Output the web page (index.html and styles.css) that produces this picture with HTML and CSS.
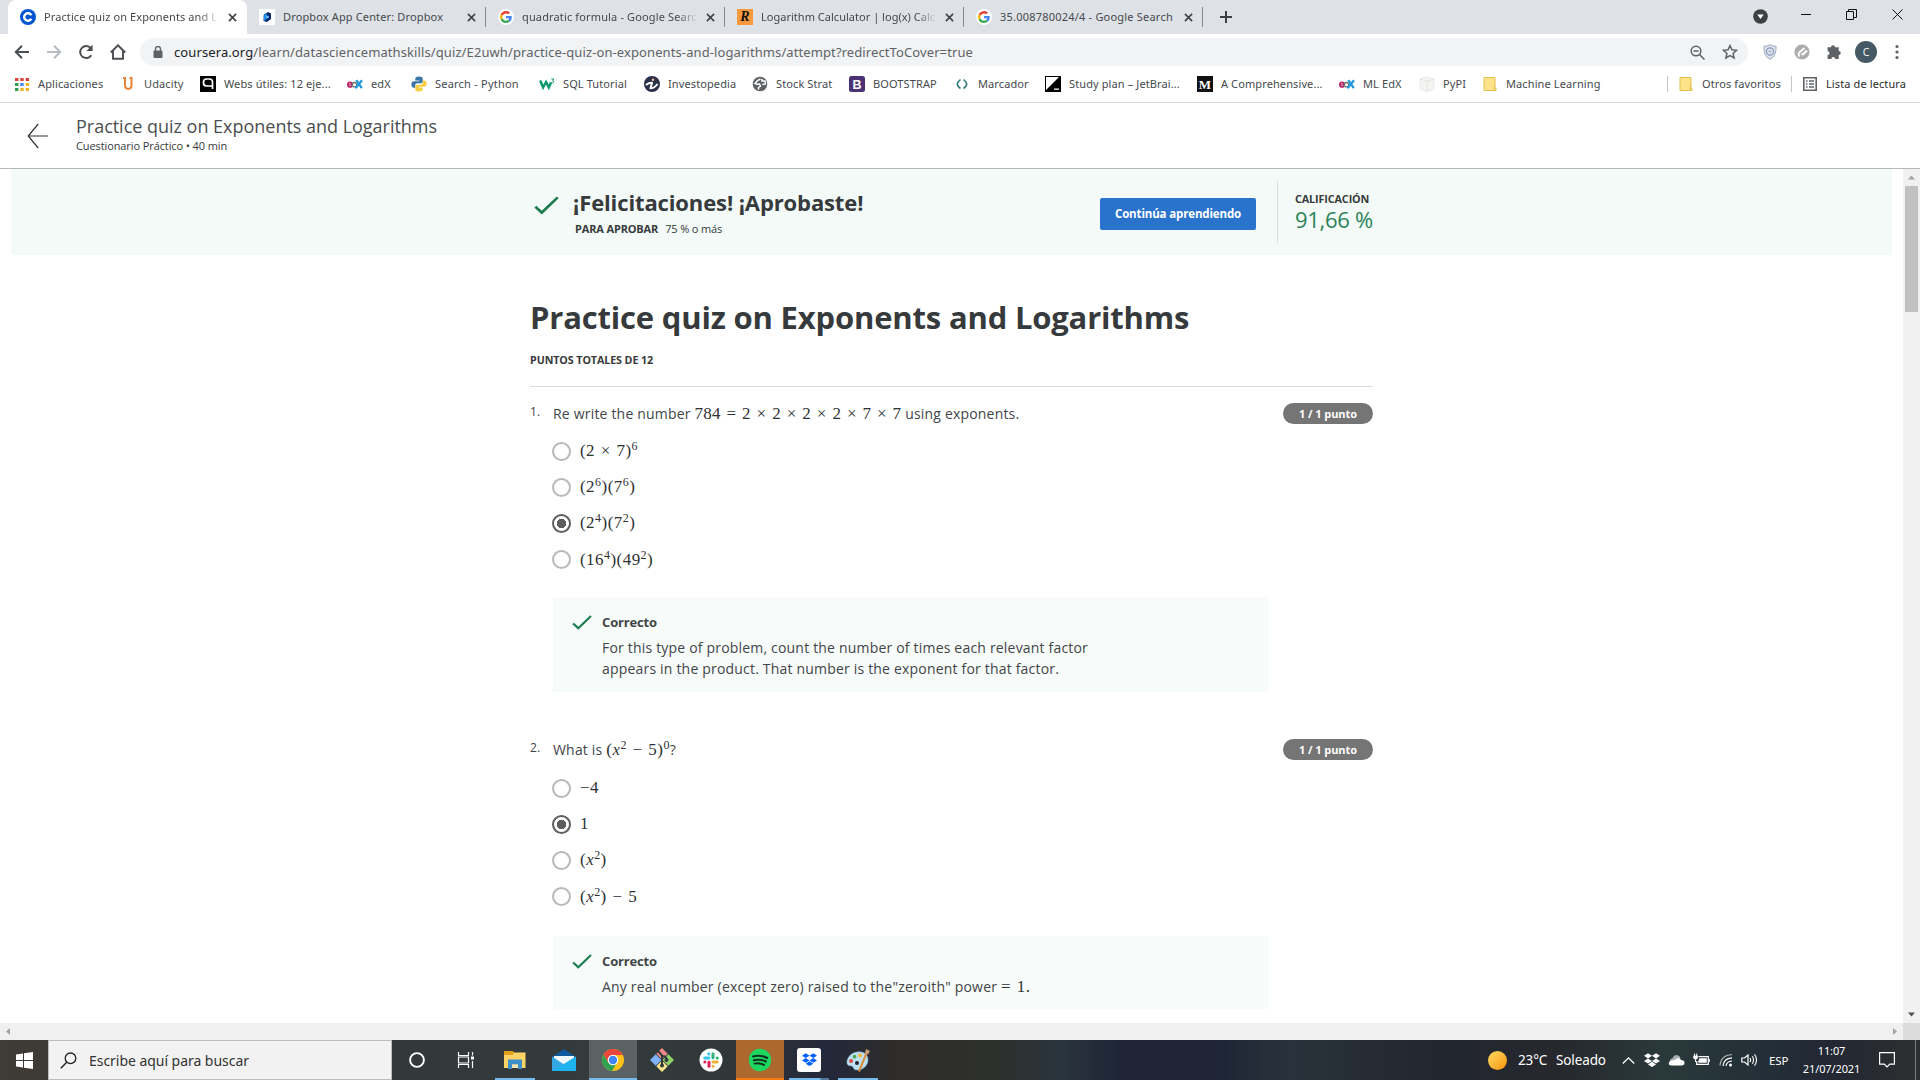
FILE: index.html
```html
<!DOCTYPE html>
<html lang="es">
<head>
<meta charset="utf-8">
<title>Practice quiz on Exponents and Logarithms</title>
<link rel="stylesheet" href="styles.css">
</head>
<body>
<svg width="0" height="0" class="defs" aria-hidden="true">
  <symbol id="google" viewBox="0 0 48 48"><path fill="#EA4335" d="M24 9.500c3.500 0 6.700 1.200 9.200 3.600l6.900-6.900C35.900 2.400 30.500 0 24 0 14.600 0 6.500 5.400 2.600 13.200l8 6.200C12.400 13.700 17.700 9.500 24 9.500z"/><path fill="#4285F4" d="M47 24.500c0-1.600-.2-3.100-.4-4.500H24v9h12.900c-.6 3-2.200 5.500-4.800 7.200l7.700 6C44.400 38 47 31.800 47 24.500z"/><path fill="#FBBC05" d="M10.500 28.600a14.500 14.500 0 010-9.200l-8-6.200a24 24 0 000 21.600z"/><path fill="#34A853" d="M24 48c6.500 0 11.900-2.100 15.900-5.800l-7.700-6c-2.200 1.500-4.900 2.300-8.200 2.300-6.300 0-11.600-4.200-13.500-9.900l-8 6.200C6.500 42.600 14.600 48 24 48z"/></symbol>
  <symbol id="close" viewBox="0 0 10 10"><path d="M1 1l8 8M9 1L1 9" stroke="#3c4043" stroke-width="1.700"/></symbol>
  <symbol id="folder" viewBox="0 0 16 16"><path d="M2 1.500h11v10l1 1v2H2z" fill="#ffe38a" stroke="#e5c04f"/><path d="M12.500 10v4" stroke="#e5b93a"/></symbol>
  <symbol id="check" viewBox="0 0 24 18"><path d="M1.300 10.200L7.500 15.800 22.800 1.200" fill="none" stroke="#1d7c50" stroke-width="2.600"/></symbol>
  <symbol id="dropbox" viewBox="0 0 20 18"><path d="M5 0l5 3.200-5 3.200L0 3.200zM15 0l5 3.200-5 3.200-5-3.200zM5 6.400l5 3.200-5 3.200L0 9.600zM15 6.400l5 3.200-5 3.200-5-3.200zM5 13.900l5-3.200 5 3.200-5 3.200z" fill="currentColor"/></symbol>
  <symbol id="edx" viewBox="0 0 16 16"><circle cx="3" cy="8.700" r="2.200" fill="none" stroke="#b72667" stroke-width="1.800"/><path d="M1 8.900h4" stroke="#b72667" stroke-width="1.300"/><circle cx="7.500" cy="8.700" r="2.200" fill="none" stroke="#777" stroke-width="1.400"/><path d="M9.300 4.200l5.500 8M15 4.200l-6.500 8" stroke="#1d9ae0" stroke-width="2.300"/></symbol>
</svg>

<header class="tabs">
  <div class="tab active"><svg class="fav" viewBox="0 0 16 16"><circle cx="8" cy="8" r="8" fill="#0056d2"/><path d="M11.300 6.200A3.800 3.800 0 1011.300 9.800" fill="none" stroke="#fff" stroke-width="2.400"/></svg><span class="tt">Practice quiz on Exponents and L</span><svg class="x"><use href="#close"/></svg></div>
  <div class="tab"><svg class="fav" viewBox="0 0 16 16"><path fill="#fff" d="M0 0h16v16H0z"/><path d="M5 5.500l4-2.500 3 1.500v5.500l-4 3-3.500-1z" fill="#0a2a6b"/><path d="M4.500 6l3.500-1.500v5L5 12z" fill="#1d8ff0"/><circle cx="8.500" cy="8" r="1.300" fill="#7cc5ff"/></svg><span class="tt">Dropbox App Center: Dropbox</span><svg class="x"><use href="#close"/></svg></div>
  <div class="tab"><span class="fav disc"><svg><use href="#google"/></svg></span><span class="tt">quadratic formula - Google Searc</span><svg class="x"><use href="#close"/></svg></div>
  <div class="tab"><span class="fav omni">R</span><span class="tt">Logarithm Calculator | log(x) Calc</span><svg class="x"><use href="#close"/></svg></div>
  <div class="tab"><span class="fav disc"><svg><use href="#google"/></svg></span><span class="tt">35.008780024/4 - Google Search</span><svg class="x"><use href="#close"/></svg></div>
  <svg class="plus" viewBox="0 0 12 12"><path d="M6 0v12M0 6h12" stroke="#3c4043" stroke-width="2"/></svg>
  <div class="win">
    <svg width="15" height="15" viewBox="0 0 15 15"><circle cx="7.500" cy="7.500" r="7.300" fill="#3c4043"/><path d="M4.300 5.500h6.400L7.500 10z" fill="#fff"/></svg>
    <svg width="10" height="10" viewBox="0 0 10 10"><path d="M0 5.500h10" stroke="#111"/></svg>
    <svg width="11" height="11" viewBox="0 0 11 11"><path d="M.5 2.500h7v8h-7zM2.500 2.500v-2h8v8h-3" fill="none" stroke="#111"/></svg>
    <svg width="11" height="11" viewBox="0 0 11 11"><path d="M.5.500l10 10M10.500.500l-10 10" stroke="#111"/></svg>
  </div>
</header>

<div class="toolbar">
  <svg class="nav" viewBox="0 0 16 16"><path d="M15 8H2.500M8 1.800L1.800 8 8 14.200" fill="none" stroke="#4a4d51" stroke-width="2"/></svg>
  <svg class="nav" viewBox="0 0 16 16"><path d="M1 8h12.500M8 1.800L14.200 8 8 14.200" fill="none" stroke="#b9bcc0" stroke-width="2"/></svg>
  <svg class="nav" viewBox="0 0 16 16"><path d="M13.300 11.200A6 6 0 1112.800 4.200" fill="none" stroke="#4a4d51" stroke-width="2"/><path d="M14.600.8v6.200H8.400z" fill="#4a4d51"/></svg>
  <svg class="nav" viewBox="0 0 16 16"><path d="M.8 8.500L8 1.300l7.200 7.200M3 7v7.800h10V7" fill="none" stroke="#4a4d51" stroke-width="1.900"/></svg>
  <div class="omnibox">
    <svg width="10" height="12" viewBox="0 0 10 12"><rect x="0.500" y="4.500" width="9" height="7.500" rx="1" fill="#5f6368"/><path d="M2.500 5V3a2.500 2.500 0 015 0v2" fill="none" stroke="#5f6368" stroke-width="1.400"/></svg>
    <span class="url"><b>coursera.org</b>/learn/datasciencemathskills/quiz/E2uwh/practice-quiz-on-exponents-and-logarithms/attempt?redirectToCover=true</span>
    <svg class="lens" width="15" height="15" viewBox="0 0 15 15"><circle cx="6" cy="6" r="4.800" fill="none" stroke="#5f6368" stroke-width="1.500"/><path d="M9.500 9.500l5 5M3.500 6h5" stroke="#5f6368" stroke-width="1.500"/></svg>
    <svg width="16" height="16" viewBox="0 0 16 16"><path d="M8 1.500l1.900 4.300 4.700.5-3.500 3.100 1 4.600L8 11.600 3.900 14l1-4.600L1.400 6.300l4.700-.5z" fill="none" stroke="#5f6368" stroke-width="1.500"/></svg>
  </div>
  <div class="ext">
    <svg width="16" height="16" viewBox="0 0 16 16"><path d="M8 .6C10 2 12 2.300 14 2.300c.2 6-1 10.500-6 13C3 12.800 1.800 8.300 2 2.300 4 2.300 6 2 8 .6z" fill="#dfe5ef" stroke="#9aa5ba"/><circle cx="8" cy="7.500" r="3.600" fill="none" stroke="#8798b8" stroke-width="1.200"/><circle cx="8" cy="7.500" r="1.500" fill="#b3bfd5"/></svg>
    <svg width="16" height="16" viewBox="0 0 16 16"><circle cx="8" cy="8" r="7.600" fill="#acacac"/><path d="M5.500 12.500c-2.500-3 .5-4.500 1.500-5.500l3.500-3M7.500 9.500l1.500 1 4-4" stroke="#fff" stroke-width="2" fill="none"/></svg>
    <svg width="16" height="16" viewBox="0 0 16 16"><path d="M5 3.300a2 2 0 014 0h3.700v3.600a2 2 0 010 4.100v4H9.200a1.900 1.900 0 00-3.800 0H1.600v-3.900a1.900 1.900 0 000-3.800V3.300z" fill="#5f6368"/></svg>
    <span class="avatar">C</span>
    <svg width="4" height="16" viewBox="0 0 4 16"><g fill="#5f6368"><circle cx="2" cy="2.500" r="1.600"/><circle cx="2" cy="8" r="1.600"/><circle cx="2" cy="13.500" r="1.600"/></g></svg>
  </div>
</div>

<nav class="marks">
  <a><svg viewBox="0 0 16 16"><path d="M1 2h3.400v3H1zM6.300 2h3.400v3H6.300zM11.600 2H15v3h-3.400z" fill="#d8453b"/><path d="M1 7h3.400v3H1zM1 12h3.400v3H1z" fill="#2f9b55"/><path d="M6.300 7h3.400v3H6.300z" fill="#4285f4"/><path d="M11.600 7H15v3h-3.400zM6.300 12h3.400v3H6.300zM11.600 12H15v3h-3.400z" fill="#f0b323"/></svg><span>Aplicaciones</span></a>
  <a><svg viewBox="0 0 16 16"><path d="M3 2h3M5 2v7.500c0 4.500 6.500 4.500 6.500 0V1.500M9.500 2h3" fill="none" stroke="#e8833a" stroke-width="2"/></svg><span>Udacity</span></a>
  <a><svg viewBox="0 0 16 16"><path d="M0 0h16v16H0z"/><path d="M12.500 13V6q0-3-3-3H6.500q-3 0-3 3v1q0 3 3 3h6" fill="none" stroke="#fff" stroke-width="1.700"/></svg><span>Webs útiles: 12 eje...</span></a>
  <a><svg><use href="#edx"/></svg><span>edX</span></a>
  <a><svg viewBox="0 0 16 16"><path d="M8 .5c-3 0-3.700 1-3.700 2.300V4.500h4v.8H3C1 5.300.4 6.800.4 8.500s.8 3.200 2.400 3.200h1.400V9.500c0-1.300 1-2.200 2.200-2.200h3.500c1 0 1.800-.9 1.800-1.900V2.700C11.700 1.300 10.500.5 8 .5z" fill="#3a74a8"/><path d="M8 15.600c3 0 3.700-1 3.700-2.300v-1.700h-4v-.8H13c2 0 2.700-1.500 2.700-3.200s-.8-3.200-2.400-3.200h-1.500v2.200c0 1.300-1 2.200-2.200 2.200H6c-1 0-1.700.9-1.700 1.900v2.700c0 1.400 1.200 2.200 3.700 2.200z" fill="#f7cf46"/></svg><span>Search - Python</span></a>
  <a><svg viewBox="0 0 16 16"><path d="M1.200 4.500l2.900 7L7 6l2.800 5.500 2.200-5" fill="none" stroke="#04996b" stroke-width="2.400"/><path d="M12.300 3h2.500l-1.200 1.500q1.700.5.800 1.800t-2.200.2" fill="none" stroke="#04996b"/></svg><span>SQL Tutorial</span></a>
  <a><svg viewBox="0 0 16 16"><circle cx="8" cy="8" r="8" fill="#2a3047"/><path d="M2 9q4-3 6-2L6.500 12q3 1 7-4" fill="none" stroke="#fff" stroke-width="2"/><circle cx="9" cy="3.800" r="1.300" fill="#f6b7a0"/></svg><span>Investopedia</span></a>
  <a><svg viewBox="0 0 16 16"><circle cx="8" cy="8" r="7.300" fill="#5f6368"/><path d="M8.500 3L5.500 4.500 3 7.500q2 1 4.500.5l1 2-2 1.500v2M10 3v2h3l.5 3-3 .5" fill="none" stroke="#fff" stroke-width="1.500"/></svg><span>Stock Strat</span></a>
  <a><svg viewBox="0 0 16 16"><rect width="16" height="16" rx="2.500" fill="#4c3274"/><text class="bs" x="8" y="12.600" text-anchor="middle">B</text></svg><span>BOOTSTRAP</span></a>
  <a><svg viewBox="0 0 16 16"><path d="M6.500 3.500Q3.500 6 3.300 8t3.200 4.500M9.500 3.500Q12.500 6 12.700 8t-3.200 4.500" fill="none" stroke="#347b7d" stroke-width="1.600"/></svg><span>Marcador</span></a>
  <a><svg viewBox="0 0 16 16"><path d="M0 0h16v16H0z"/><path d="M1 1h13L1 14zM9 12.500h5v1.200H9z" fill="#fff"/></svg><span>Study plan – JetBrai...</span></a>
  <a><svg viewBox="0 0 16 16"><path d="M0 0h16v16H0z" fill="#111"/><text class="md" x="8" y="12.500" text-anchor="middle">M</text></svg><span>A Comprehensive...</span></a>
  <a><svg><use href="#edx"/></svg><span>ML EdX</span></a>
  <a><svg viewBox="0 0 16 16"><path d="M1 3l7-2.500L15 3v10l-7 2.500L1 13z" fill="#f4f4f2" stroke="#e3e3e0" stroke-width=".7"/><path d="M1 3l7 2.500L15 3M8 5.500v10" fill="none" stroke="#dddddb" stroke-width=".7"/></svg><span>PyPI</span></a>
  <a><svg><use href="#folder"/></svg><span>Machine Learning</span></a>
  <a class="sep"><svg><use href="#folder"/></svg><span>Otros favoritos</span></a>
  <a class="sep dark"><svg viewBox="0 0 16 16"><path d="M1.800 1.800h12.400v12.400H1.800z" fill="none" stroke="#5f6368" stroke-width="1.600"/><path d="M4 5h1.500M7 5h5M4 8h1.500M7 8h5M4 11h1.500M7 11h5" stroke="#5f6368" stroke-width="1.400"/></svg><span>Lista de lectura</span></a>
</nav>

<div class="crumb">
  <svg width="22" height="26" viewBox="0 0 22 26"><path d="M21 13H1.200M11.200 1L1.200 13l10 12" fill="none" stroke="#333" stroke-width="1.200"/></svg>
  <div><h2>Practice quiz on Exponents and Logarithms</h2><p>Cuestionario Práctico • 40 min</p></div>
</div>

<main class="view">
  <div class="scroll">
    <section class="banner">
      <svg class="bigcheck"><use href="#check"/></svg>
      <div class="grats"><h3>¡Felicitaciones! ¡Aprobaste!</h3><p><b>PARA APROBAR</b><span>75 % o más</span></p></div>
      <button>Continúa aprendiendo</button>
      <div class="grade"><b>CALIFICACIÓN</b><strong>91,66 %</strong></div>
    </section>

    <article class="quiz">
      <h1>Practice quiz on Exponents and Logarithms</h1>
      <p class="total">PUNTOS TOTALES DE 12</p>

      <section class="q q1">
        <div class="num">1.</div>
        <div class="body">
          <p class="ask">Re write the number <span class="m wide">784 = 2 × 2 × 2 × 2 × 7 × 7</span> using exponents.</p>
          <ul>
            <li><i></i><span class="m">(2 × 7)<sup>6</sup></span></li>
            <li><i></i><span class="m">(2<sup>6</sup>)(7<sup>6</sup>)</span></li>
            <li><i class="on"></i><span class="m">(2<sup>4</sup>)(7<sup>2</sup>)</span></li>
            <li><i></i><span class="m">(16<sup>4</sup>)(49<sup>2</sup>)</span></li>
          </ul>
          <div class="fb"><svg><use href="#check"/></svg><div><b>Correcto</b><p>For this type of problem, count the number of times each relevant factor<br>appears in the product. That number is the exponent for that factor.</p></div></div>
        </div>
        <div class="pts">1 / 1 punto</div>
      </section>

      <section class="q q2">
        <div class="num">2.</div>
        <div class="body">
          <p class="ask">What is <span class="m">(<em>x</em><sup>2</sup> − 5)<sup>0</sup></span>?</p>
          <ul>
            <li><i></i><span class="m">−4</span></li>
            <li><i class="on"></i><span class="m">1</span></li>
            <li><i></i><span class="m">(<em>x</em><sup>2</sup>)</span></li>
            <li><i></i><span class="m">(<em>x</em><sup>2</sup>) − 5</span></li>
          </ul>
          <div class="fb"><svg><use href="#check"/></svg><div><b>Correcto</b><p>Any real number (except zero) raised to the"zeroith" power <span class="m">= 1.</span></p></div></div>
        </div>
        <div class="pts">1 / 1 punto</div>
      </section>
    </article>
  </div>
  <div class="vbar"><svg viewBox="0 0 17 17"><path d="M5 10.500h7L8.500 6.500z" fill="#a3a3a3"/></svg><div class="thumb"></div><svg class="end" viewBox="0 0 17 17"><path d="M5 6.500h7l-3.500 4z" fill="#505050"/></svg></div>
</main>
<div class="hbar"><svg viewBox="0 0 17 17"><path d="M10 5v7L6 8.500z" fill="#a3a3a3"/></svg><svg class="end" viewBox="0 0 17 17"><path d="M7 5v7l4-3.500z" fill="#a3a3a3"/></svg><div class="corner"></div></div>

<footer class="task">
  <div class="start"><svg width="17" height="17" viewBox="0 0 17 17"><path d="M0 2.400l7-1v6.700H0zM8 1.200L17 0v8.100H8zM0 9h7v6.600l-7-1zM8 9h9v8l-9-1.200z" fill="#fff"/></svg></div>
  <div class="search"><svg width="17" height="17" viewBox="0 0 17 17"><circle cx="10.500" cy="6.300" r="5.300" fill="none" stroke="#222" stroke-width="1.300"/><path d="M6.700 10.200L.8 16.300" stroke="#222" stroke-width="1.400"/></svg><span>Escribe aquí para buscar</span></div>
  <div class="apps">
    <div><svg viewBox="0 0 24 24"><circle cx="12" cy="12" r="6.900" fill="none" stroke="#fff" stroke-width="1.900"/></svg></div>
    <div><svg viewBox="0 0 24 24"><path d="M4.500 4v3.500h10V4M4.500 20v-3.500h10V20M4.500 9h10v6h-10zM18.500 4v3.500M18.500 13v7" fill="none" stroke="#fff" stroke-width="1.200"/><path d="M17 8.500h3v3h-3z" fill="#fff"/></svg></div>
    <div class="run"><svg viewBox="0 0 24 24"><path d="M1 3h9l1.500 2H22v4H1z" fill="#e0a01e"/><path d="M11 4.500h11.500V20H1V7h8.500z" fill="#fcd364"/><path d="M5 11.500h14V21h-4v-4.500H9V21H5z" fill="#3d90cc"/><path d="M9 16.500h6V20H9z" fill="#f1e3b3"/></svg></div>
    <div><svg viewBox="0 0 24 24"><path d="M0 9L12 1l12 8v3H0z" fill="#0f5a9f"/><path d="M2 8h20v9H2z" fill="#eef7fc"/><path d="M0 8.500l12 8 12-8V23H0z" fill="#35a7e5"/><path d="M24 8.500V23H0z" fill="#1fb4f0"/></svg></div>
    <div class="run cur"><svg viewBox="0 0 24 24"><circle cx="12" cy="12" r="11" fill="#fbc116"/><path d="M12 1A11 11 0 002.500 6.500L7.500 15 12 7h9.800A11 11 0 0012 1z" fill="#e8453c"/><path d="M2.500 6.500a11 11 0 008.500 16.500l5-8.500-8.500.5z" fill="#30a14e"/><circle cx="12" cy="12" r="5.300" fill="#fff"/><circle cx="12" cy="12" r="4.200" fill="#4285f4"/></svg></div>
    <div><svg viewBox="0 0 24 24"><path d="M12 0l5.700 5.700L12 11.500 6.300 5.700z" fill="#f08a8a"/><path d="M18.300 6.300L24 12l-5.700 5.700L12.500 12z" fill="#8fd16a"/><path d="M5.700 6.300L11.500 12l-5.800 5.700L0 12z" fill="#7fb2fa"/><path d="M12 12.500l5.700 5.700L12 24l-5.700-5.800z" fill="#ffe38c"/><path d="M8 3l4 4.500V18M12 8q5 0 4.500 4" fill="none" stroke="#333a3a" stroke-width="2"/><circle cx="12" cy="17.500" r="2" fill="#333a3a"/><circle cx="16.500" cy="12" r="2" fill="#333a3a"/></svg></div>
    <div><svg viewBox="0 0 24 24"><circle cx="12" cy="12" r="11.500" fill="#fff"/><g stroke-width="3" stroke-linecap="round" fill="none"><path d="M5.800 10h4" stroke="#36c5f0"/><path d="M9.700 5.800v.1" stroke="#36c5f0"/><path d="M14 5.800v4" stroke="#2eb67d"/><path d="M18.200 10h.1" stroke="#2eb67d"/><path d="M14.200 14h4" stroke="#ecb22e"/><path d="M14 18.200v.1" stroke="#ecb22e"/><path d="M10 14.200v4" stroke="#e01e5a"/><path d="M5.800 14h.1" stroke="#e01e5a"/></g></svg></div>
    <div class="alert"><svg viewBox="0 0 24 24"><circle cx="12" cy="12" r="11.200" fill="#1ed760"/><path d="M5 8.500q7.500-2 14.300 1.500M5.800 12.200q6.500-1.600 12 1.300M6.500 15.600q5-1.300 9.500 1.300" fill="none" stroke="#10331d" stroke-width="2" stroke-linecap="round"/></svg></div>
    <div class="run multi"><span class="dbx"><svg><use href="#dropbox"/></svg></span></div>
    <div class="run"><svg viewBox="0 0 24 24"><path d="M11 4C4 5 .5 11 1 15s5 2 6 4 1 3 5 3 10-4 10-10S17 3 11 4z" fill="#bfe0f3" stroke="#7bb0d0" stroke-width=".6"/><circle cx="5" cy="13" r="2" fill="#d94b3d"/><circle cx="8.500" cy="8.700" r="1.900" fill="#4cab4f"/><circle cx="14" cy="7.500" r="2" fill="#f2b632"/><circle cx="11" cy="15" r="2" fill="#1c2433"/><path d="M13 23.500L21 4" stroke="#d98d3c" stroke-width="2"/><path d="M19 5l1-4 4 2-2 3.500z" fill="#c79a72"/></svg></div>
  </div>
  <div class="tray">
    <span class="sun"></span>
    <span class="temp">23°C</span><span class="sol">Soleado</span>
    <svg class="i1" width="13" height="13" viewBox="0 0 13 13"><path d="M.8 9.500l5.700-5.700 5.700 5.700" fill="none" stroke="#fff" stroke-width="1.300"/></svg>
    <svg class="i2" width="16" height="15"><use href="#dropbox"/></svg>
    <svg class="i3" width="17" height="12" viewBox="0 0 17 12"><path d="M2 9q-1-4 2.500-5Q6 .5 9.500 1.200 12 2 12.500 4L6 8z" fill="#a9aeb0"/><path d="M3.500 11.500Q.5 11.500.8 9t3-2.500Q6 5.800 7 6q2-3 5-1.500l1 1.500q3.500 0 3.500 2.800t-3 2.700z" fill="#fff"/></svg>
    <svg class="i4" width="17" height="14" viewBox="0 0 17 14"><path d="M5.500 3.700h9.800v7.600H3.700V8" fill="none" stroke="#fff" stroke-width="1.200"/><path d="M6.500 5.300h7.300v4.400H5.300V8zM15.500 6h1.300v3h-1.300zM.3 2.500h4.500v2.700q-2 2.500-4.500 0zM1 .5h1v2H1zM3.200.5h1v2h-1zM2 6h1v3H2z" fill="#fff"/></svg>
    <svg class="i5" width="14" height="14" viewBox="0 0 14 14"><g fill="none" stroke="#fff" stroke-width="1.200"><path d="M1 12.500Q1.500 2.500 13 1.500" opacity=".6"/><path d="M4 13Q4.500 5.500 13 4.800"/><path d="M7 13Q7.500 8.500 13 8"/></g><circle cx="11.500" cy="12" r="1.500" fill="#fff"/></svg>
    <svg class="i6" width="17" height="14" viewBox="0 0 17 14"><path d="M.8 5v4h2.700L7 12V2L3.500 5z" fill="none" stroke="#fff" stroke-width="1.200"/><path d="M9 5q1.200 2 0 4M11.300 3.200q2.500 3.800 0 7.600M13.500 1.300q4 5.700 0 11.400" fill="none" stroke="#fff" stroke-width="1.100"/></svg>
    <span class="esp">ESP</span>
    <span class="clock"><span>11:07</span><span>21/07/2021</span></span>
    <svg class="i7" width="16" height="16" viewBox="0 0 16 16"><path d="M.6.600h14.800v11.500h-4.600L8 15l-2.700-2.900H.6z" fill="none" stroke="#fff" stroke-width="1.200"/></svg>
  </div>
</footer>
</body>
</html>
```
FILE: styles.css
```css
* { box-sizing: border-box; margin: 0; padding: 0; }
body { width: 1920px; height: 1080px; overflow: hidden; background: #fff; font-family: "Open Sans", "Noto Sans", sans-serif; color: #373a3c; display: flex; flex-direction: column; white-space: nowrap; }
svg { display: block; flex: none; }
.defs { position: absolute; }

/* Tab strip */
.tabs { height: 34px; background: #dee1e6; display: flex; align-items: stretch; padding-left: 8px; flex: none; font-family: "Noto Sans", sans-serif; }
.tab { width: 239px; display: flex; align-items: center; padding: 0 11px 0 12px; position: relative; color: #45494d; font-size: 11px; letter-spacing: .14px; }
.tab::after { content: ""; position: absolute; right: 0; top: 7px; width: 1px; height: 20px; background: #85888d; }
.tab.active { background: #fff; border-radius: 8px 8px 0 0; letter-spacing: .1px; }
.tab.active::after { display: none; }
.tab:nth-child(4) { letter-spacing: .02px; }
.tab:nth-child(5) { letter-spacing: .21px; }
.fav { width: 16px; height: 16px; margin-right: 8px; flex: none; }
.disc { background: #fff; border-radius: 50%; display: flex; align-items: center; justify-content: center; }
.disc svg { width: 12px; height: 12px; }
.omni { background: #f79a3e; color: #111; font: italic bold 14px/16px "Liberation Serif", serif; text-align: center; }
.tt { flex: 1; overflow: hidden; padding-bottom: 2px; }
.tab:nth-child(1) .tt, .tab:nth-child(3) .tt, .tab:nth-child(4) .tt { -webkit-mask-image: linear-gradient(90deg, #000 155px, transparent 176px); mask-image: linear-gradient(90deg, #000 155px, transparent 176px); }
.x { width: 9px; height: 9px; margin-left: 7px; }
.tab .x { margin-right: -1px; margin-left: 8px; }
.plus { width: 12px; height: 12px; margin: 11px 0 0 17px; }
.win { margin-left: auto; display: flex; align-items: center; gap: 35px; padding-right: 17px; height: 28px; }
.win svg:first-child { margin: 5px -2px 0 0; }

/* Toolbar */
.toolbar { height: 34px; display: flex; align-items: center; flex: none; padding: 2px 0 0 14px; }
.nav { width: 16px; height: 16px; margin-right: 16px; }
.omnibox { width: 1608px; height: 28px; margin-left: -2px; border-radius: 14px; background: #f1f3f4; display: flex; align-items: center; padding: 0 10px 0 13px; color: #5f6368; font: 13px "Noto Sans", sans-serif; letter-spacing: .1px; }
.url { margin-left: 11px; }
.url b { font-weight: 400; color: #202124; }
.lens { margin: 0 17px 0 auto; }
.ext { display: flex; align-items: center; gap: 16px; padding-left: 14px; }
.avatar { width: 22px; height: 22px; border-radius: 50%; background: #455a64; color: #fff; font-size: 10.5px; line-height: 22px; text-align: center; margin: 0 2px 0 -3px; }

/* Bookmarks */
.marks { height: 35px; border-bottom: 1px solid #d5d7da; display: grid; align-items: center; flex: none; padding: 0 0 3px 14px; font: 11px "Noto Sans", sans-serif; letter-spacing: .11px; color: #45494d; grid-template-columns: 106px 80px 147px 64px 128px 105px 108px 97px 105px 91px 152px 142px 80px 63px 196px 124px 120px; }
.marks a { display: flex; align-items: center; gap: 8px; position: relative; }
.marks a:nth-child(5) { letter-spacing: .22px; }
.marks svg { width: 16px; height: 16px; }
.marks .sep::before { content: ""; position: absolute; left: -11px; top: 0; width: 1px; height: 16px; background: #c3c6ca; }
.marks .dark { color: #2a2c2e; }
.bs { font: bold 12.500px "Liberation Sans", sans-serif; fill: #fff; }
.md { font: bold 13px "Liberation Serif", serif; fill: #fff; }

/* Course header */
.crumb { height: 66px; border-bottom: 1px solid #b4b8b8; display: flex; align-items: flex-start; flex: none; padding-left: 27px; }
.crumb svg { margin: 20px 27px 0 0; }
.crumb h2 { font-size: 18px; font-weight: 400; line-height: 24px; margin-top: 11px; color: #4b4e50; letter-spacing: -.02px; }
.crumb p { font-size: 11px; line-height: 16px; letter-spacing: -.1px; }

/* Scrolling view */
.view { height: 854px; display: flex; flex: none; overflow: hidden; }
.scroll { width: 1903px; padding: 0 11px; }
.banner { height: 86px; background: #f3faf7; display: flex; padding-left: 522px; }
.bigcheck { width: 25px; height: 19px; margin: 27px 15px 0 1px; }
.grats { width: 526px; }
.grats h3 { font-size: 22px; font-weight: 700; line-height: 30px; margin: 18px 0 0 -1px; letter-spacing: -.12px; }
.grats p { font-size: 11px; line-height: 16px; margin: 4px 0 0 1px; display: flex; gap: 7px; letter-spacing: -.15px; }
.banner button { width: 156px; height: 32px; padding-bottom: 1px; margin: 29px 21px 0 0; border: 0; border-radius: 2px; background: #2a73cc; color: #fff; font: bold 11.500px "Open Sans", sans-serif; letter-spacing: -.14px; }
.grade { border-left: 1px solid #d5dcd9; height: 62px; margin-top: 12px; padding: 10px 0 0 17px; display: flex; flex-direction: column; }
.grade b { font-size: 10.800px; font-weight: 700; line-height: 16px; letter-spacing: -.12px; }
.grade strong { font-size: 22px; font-weight: 400; line-height: 24px; color: #2a8258; letter-spacing: -.27px; }

.quiz { width: 843px; margin-left: 519px; padding-top: 40px; }
h1 { font-size: 31px; font-weight: 700; line-height: 44px; letter-spacing: -.18px; }
.total { font-size: 10.700px; font-weight: 700; line-height: 16px; margin-top: 13px; height: 35px; border-bottom: 1px solid #dadddd; letter-spacing: -.08px; }
.q { display: flex; font-size: 14px; color: #424547; letter-spacing: .19px; }
.num { width: 23px; font-size: 12px; line-height: 16px; }
.body { width: 716px; }
.ask { line-height: 22px; height: 22px; }
.m { font-family: "Liberation Serif", serif; font-size: 17px; line-height: 20px; letter-spacing: .45px; word-spacing: 1px; color: #2f3234; }
.wide { letter-spacing: .25px; word-spacing: 1.250px; }
sup { font-size: 12px; line-height: 0; vertical-align: baseline; position: relative; top: -6px; }
ul { list-style: none; }
li { height: 36.200px; display: flex; align-items: center; }
li i { width: 19px; height: 19px; border: 2px solid #b9b9b9; border-radius: 50%; margin: 0 9px 0 -1px; flex: none; }
li i.on { border-color: #5e5e5e; background: radial-gradient(circle, #5e5e5e 4.500px, transparent 5px); }
.fb { background: #f7fbfa; display: flex; padding-left: 19px; }
.fb svg { width: 20px; height: 15px; margin: 18px 10px 0 0; }
.fb b { font-size: 13px; line-height: 18px; display: inline-block; margin-top: 16px; letter-spacing: -.15px; }
.fb p { line-height: 21.500px; margin-top: 5.500px; }
.pts { margin-left: auto; width: 90px; height: 21px; border-radius: 11px; background: #757575; color: #fff; font-size: 11px; font-weight: 700; line-height: 21px; text-align: center; letter-spacing: -.06px; }
.q1 { padding-top: 16px; height: 336px; }
.q1 .num, .q2 .num { margin-top: 1px; }
.q1 ul { padding-top: 8px; height: 172px; }
.q1 .fb { height: 95px; }
.q2 { padding-top: 16px; }
.q2 ul { padding-top: 9px; height: 175px; }
.q2 .fb { height: 73px; }

/* Scrollbars */
.vbar { width: 17px; background: #f1f1f1; display: flex; flex-direction: column; }
.vbar svg, .hbar svg { width: 17px; height: 17px; }
.thumb { height: 126px; margin: 0 2px; background: #c1c1c1; }
.end { margin-top: auto; }
.hbar { height: 17px; background: #f0f0f0; display: flex; flex: none; }
.hbar .end { margin: 0 0 0 auto; }
.corner { width: 17px; background: #dcdcdc; }

/* Taskbar */
.task { height: 40px; flex: none; display: flex; color: #fff; background: linear-gradient(90deg, #3f3b36 0, #33383a 400px, #343b3c 600px, #313838 720px, #23283a 830px, #2f2d29 900px, #2d302d 1000px, #29343c 1060px, #1f2536 1120px, #1f2536 1220px, #29323a 1290px, #22262f 1440px, #26282d 1560px, #2a393b 1660px, #243238 1740px, #222733 1830px, #2d2f30 1920px); font-family: "Noto Sans", sans-serif; }
.start { width: 48px; display: flex; align-items: center; justify-content: center; }
.search { width: 344px; background: #f2f2f2; border: 1px solid #bdbdbd; display: flex; align-items: center; gap: 12px; padding-left: 11px; color: #333; font-size: 14px; letter-spacing: -.04px; }
.apps { display: flex; gap: 1px; padding-left: 1px; }
.apps > div { width: 48px; display: flex; align-items: center; justify-content: center; position: relative; }
.apps svg { width: 24px; height: 24px; }
.run::after { content: ""; position: absolute; left: 4px; right: 4px; bottom: 0; height: 2px; background: #76b9ed; }
.apps .cur { background: #5b6264; }
.cur::after { left: 0; right: 0; }
.apps .alert { background: linear-gradient(#ad6830 38px, #f5780c 38px); }
.multi::after { background: linear-gradient(90deg, #76b9ed 31px, #4e7a9c 32px); }
.dbx { width: 24px; height: 24px; border-radius: 3px; background: #fff; color: #0061fe; display: flex; align-items: center; justify-content: center; }
.apps .dbx svg { width: 15px; height: 14px; }
.tray { margin-left: auto; display: flex; align-items: center; padding-right: 25px; position: relative; font-size: 13.500px; letter-spacing: -.12px; }
.tray::after { content: ""; position: absolute; right: 4px; top: 0; width: 1px; height: 40px; background: #7d7f80; }
.sun { width: 19px; height: 19px; border-radius: 50%; background: linear-gradient(135deg, #ffdc65, #f7930d); margin-right: 10px; }
.temp { width: 38px; margin-left: 1px; }
.sol { width: 66px; }
.i1, .i4 { margin-right: 9px; }
.i2, .i3, .i5 { margin-right: 8px; }
.i6 { margin-right: 11px; }
.esp { width: 34px; font-size: 11.500px; }
.clock { width: 57px; display: flex; flex-direction: column; align-items: center; font-size: 11px; line-height: 18px; margin-right: 19px; }
```
